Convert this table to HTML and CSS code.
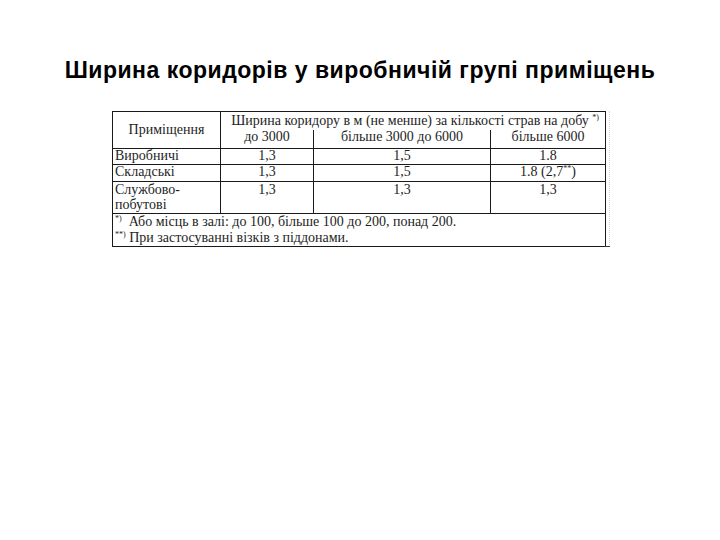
FILE: index.html
```html
<!DOCTYPE html>
<html lang="uk">
<head>
<meta charset="utf-8">
<link rel="stylesheet" href="styles.css">
</head>
<body>
<div class="page">
  <h1 class="title">Ширина коридорів у виробничій групі приміщень</h1>
  <div class="table-wrap">
    <table class="corridors">
      <colgroup>
        <col class="c1"><col class="c2"><col class="c3"><col class="c4">
      </colgroup>
      <tr class="h1">
        <td rowspan="2" class="room-head">Приміщення</td>
        <td colspan="3" class="width-head">Ширина коридору в м (не менше) за кількості страв на добу <sup>*)</sup></td>
      </tr>
      <tr class="h2">
        <td class="sub">до 3000</td>
        <td class="sub">більше 3000 до 6000</td>
        <td class="sub last">більше 6000</td>
      </tr>
      <tr class="r1">
        <td class="name">Виробничі</td>
        <td class="num">1,3</td>
        <td class="num">1,5</td>
        <td class="num">1.8</td>
      </tr>
      <tr class="r2">
        <td class="name">Складські</td>
        <td class="num">1,3</td>
        <td class="num">1,5</td>
        <td class="num">1.8 (2,7<sup>**</sup>)</td>
      </tr>
      <tr class="r3">
        <td class="name">Службово-<br>побутові</td>
        <td class="num">1,3</td>
        <td class="num">1,3</td>
        <td class="num">1,3</td>
      </tr>
      <tr class="foot">
        <td colspan="4" class="notes"><sup>*)</sup>&nbsp; Або місць в залі: до 100, більше 100 до 200, понад 200.<br><sup>**)</sup> При застосуванні візків з піддонами.</td>
      </tr>
    </table>
  </div>
</div>
</body>
</html>
```
FILE: styles.css
```css
html, body {
  margin: 0;
  padding: 0;
  background: #ffffff;
}
.page {
  width: 720px;
  height: 540px;
  padding-top: 57px;
  box-sizing: border-box;
}
.title {
  margin: 0;
  font-family: "Liberation Sans", Arial, sans-serif;
  font-weight: bold;
  font-size: 23px;
  letter-spacing: 0.5px;
  line-height: 26px;
  color: #000;
  text-align: center;
}
.table-wrap {
  position: relative;
  margin-top: 28px;
  margin-left: 112px;
  width: 497px;
  border-right: 1px dotted #d8d8d8;
}
.table-wrap::after {
  content: "";
  position: absolute;
  right: -1px;
  bottom: 0;
  width: 6px;
  height: 1px;
  background: #333;
}
.corridors {
  border-collapse: collapse;
  table-layout: fixed;
  width: 493px;
  font-family: "Liberation Serif", "Times New Roman", serif;
  font-size: 14px;
  line-height: 16px;
  color: #1e1e1e;
  border: 1px solid #1a1a1a;
}
.c1 { width: 108px; }
.c2 { width: 93px; }
.c3 { width: 177px; }
.c4 { width: 115px; }
.corridors td {
  padding: 0;
  border: 1px solid #1a1a1a;
  vertical-align: top;
}
.corridors sup {
  font-size: 8px;
  line-height: 0;
  vertical-align: 5px;
}
.room-head {
  text-align: center;
  vertical-align: middle !important;
}
.width-head {
  text-align: center;
  border-bottom: none !important;
  height: 17px;
  padding-top: 1px !important;
  white-space: nowrap;
  padding-left: 4px !important;
}
.h2 td.sub {
  border-top: none;
  text-align: center;
  height: 18px;
  line-height: 14px;
}
.name {
  padding-left: 2px !important;
}
.num {
  text-align: center;
}
.r1 td, .r2 td { line-height: 14px; }
.r1 td { height: 15px; }
.r2 td { height: 16px; }
.r3 td { height: 31px; line-height: 15px; }
.notes {
  padding-left: 2px !important;
  height: 32px;
}
```
